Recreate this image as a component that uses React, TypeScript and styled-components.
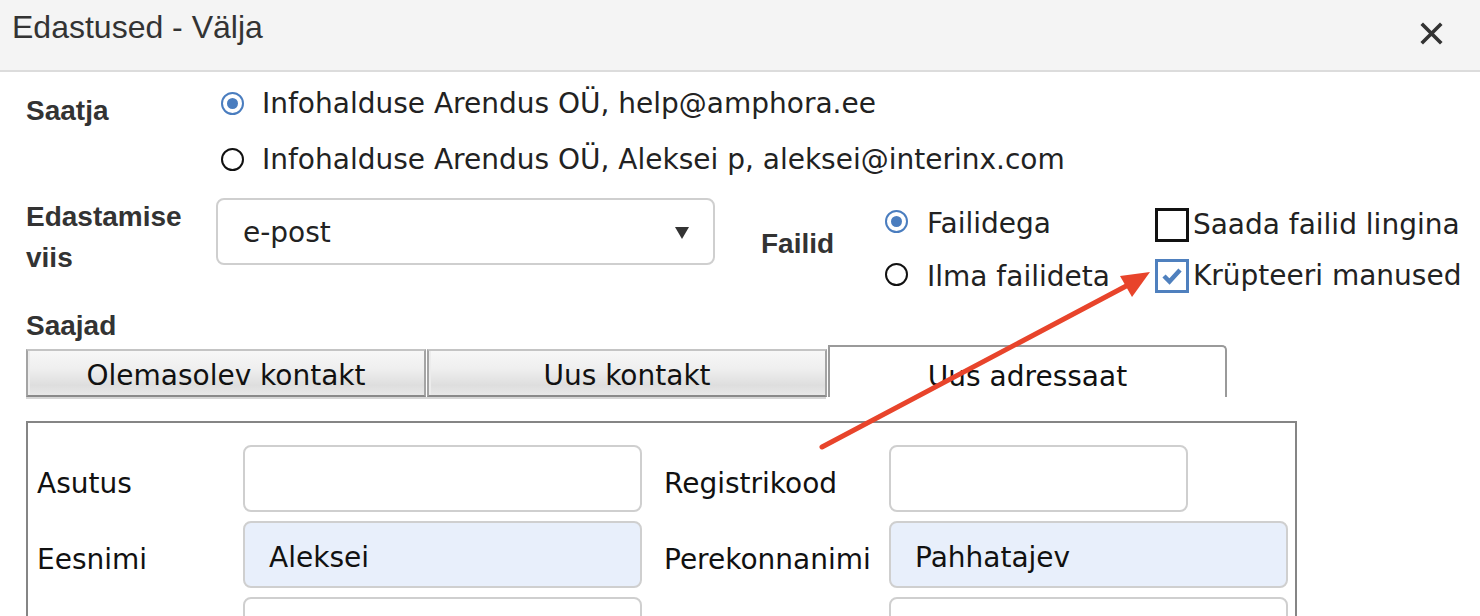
import React from "react";
import styled, { createGlobalStyle } from "styled-components";

const Global = createGlobalStyle`
  html, body { margin: 0; padding: 0; background: #fff; }
  body { font-family: "DejaVu Sans", Verdana, sans-serif; color: #222; }
  * { box-sizing: border-box; }
`;

const Dialog = styled.div`
  position: relative;
  width: 1480px;
  height: 616px;
  overflow: hidden;
  background: #fff;
`;

const Header = styled.div`
  height: 72px;
  background: #f4f4f4;
  border-bottom: 2px solid #dcdcdc;
  display: flex;
  justify-content: space-between;
  align-items: flex-start;
  padding: 8px 36px 0 12px;
`;

const Title = styled.div`
  font-family: "Liberation Sans", Arial, sans-serif;
  font-size: 32px;
  line-height: 38px;
  color: #333;
`;

const CloseBtn = styled.div`
  width: 24px;
  height: 24px;
  margin-top: 14px;
  display: flex;
`;

const Body = styled.div`
  padding: 3px 0 0 26px;
`;

const SenderRow = styled.div`
  display: grid;
  grid-template-columns: 195px 1fr;
`;

const BoldLabel = styled.div<{ $pt?: number; $w?: number; $lh?: number }>`
  font-family: "Liberation Sans", Arial, sans-serif;
  font-weight: bold;
  font-size: 28px;
  line-height: ${(p) => p.$lh ?? 56}px;
  color: #333;
  padding-top: ${(p) => p.$pt ?? 0}px;
  width: ${(p) => (p.$w ? p.$w + "px" : "auto")};
  flex-shrink: 0;
`;

const OptionList = styled.div`
  display: flex;
  flex-direction: column;
`;

const OptionItem = styled.div<{ $h: number }>`
  display: flex;
  align-items: center;
  height: ${(p) => p.$h}px;
  font-size: 28px;
  color: #222;
  white-space: nowrap;
`;

const Radio = styled.span<{ $on?: boolean; $gap: number; $lift?: number }>`
  width: 23px;
  height: 23px;
  border-radius: 50%;
  border: 2px solid ${(p) => (p.$on ? "#4a7dbf" : "#111")};
  margin-right: ${(p) => p.$gap}px;
  margin-top: ${(p) => -(p.$lift ?? 0) * 2}px;
  display: flex;
  align-items: center;
  justify-content: center;
  flex-shrink: 0;
  &::after {
    content: "";
    display: ${(p) => (p.$on ? "block" : "none")};
    width: 11px;
    height: 11px;
    border-radius: 50%;
    background: #4a7dbf;
  }
`;

const Check = styled.span<{ $on?: boolean }>`
  width: 34px;
  height: 34px;
  border: 3px solid ${(p) => (p.$on ? "#4f80be" : "#111")};
  margin-right: 4px;
  flex-shrink: 0;
  display: flex;
  align-items: center;
  justify-content: center;
`;

const DeliveryRow = styled.div`
  display: flex;
  margin-top: 11px;
  height: 150px;
`;

const SelectBox = styled.div`
  width: 499px;
  height: 67px;
  border: 2px solid #cfcfcf;
  border-radius: 8px;
  display: flex;
  align-items: center;
  justify-content: space-between;
  padding: 2px 24px 0 25px;
  font-size: 28px;
  color: #222;
  flex-shrink: 0;
`;

const FilesLabel = styled(BoldLabel)`
  margin-left: 46px;
`;

const FilesOptions = styled(OptionList)`
  margin-top: -1px;
`;

const CheckOptions = styled(OptionList)`
  margin-left: 45px;
  margin-top: 1px;
`;

const Recipients = styled.div`
  margin-top: -42px;
`;

const TabBar = styled.div`
  display: flex;
  align-items: flex-end;
  height: 52px;
  margin-top: -1px;
  position: relative;
  &::after {
    content: "";
    position: absolute;
    left: 0;
    width: 800px;
    bottom: -2px;
    height: 2px;
    background: #d6d6d6;
  }
`;

const Tab = styled.div<{ $active?: boolean }>`
  width: ${(p) => (p.$active ? 399 : 400)}px;
  height: ${(p) => (p.$active ? 52 : 48)}px;
  margin-right: 1px;
  display: flex;
  align-items: center;
  justify-content: center;
  font-size: 28px;
  color: #111;
  padding-top: ${(p) => (p.$active ? 8 : 4)}px;
  border: 2px solid ${(p) => (p.$active ? "#9a9a9a" : "#a4a4a4")};
  border-bottom: ${(p) => (p.$active ? "none" : "2px solid #8a8a8a")};
  border-top-color: ${(p) => (p.$active ? "#9a9a9a" : "#c4c4c4")};
  border-radius: ${(p) => (p.$active ? "0 5px 0 0" : "0")};
  background: ${(p) =>
    p.$active
      ? "#fff"
      : "linear-gradient(to bottom, #f7f7f7 0%, #efefef 40%, #dedede 78%, #e8e8e8 100%)"};
  box-shadow: ${(p) => (p.$active ? "none" : "inset 2px 0 0 #ececec")};
`;

const Panel = styled.div`
  margin-top: 24px;
  width: 1271px;
  height: 260px;
  border: 2px solid #858585;
  padding: 22px 0 0 9px;
`;

const FormGrid = styled.div`
  display: grid;
  grid-template-columns: 206px 399px 22px 225px auto;
  grid-auto-rows: 67px;
  row-gap: 9px;
  align-items: center;
`;

const FieldLabel = styled.div<{ $col: number }>`
  grid-column: ${(p) => p.$col};
  font-size: 28px;
  color: #111;
  padding-top: 10px;
  white-space: nowrap;
`;

const Input = styled.div<{ $w: number; $filled?: boolean; $col: number }>`
  grid-column: ${(p) => p.$col};
  width: ${(p) => p.$w}px;
  height: 67px;
  border: 2px solid #cfcfcf;
  border-radius: 8px;
  background: ${(p) => (p.$filled ? "#e8effb" : "#fff")};
  display: flex;
  align-items: center;
  padding: 6px 0 0 24px;
  font-size: 28px;
  color: #111;
`;

const Overlay = styled.svg`
  position: absolute;
  left: 0;
  top: 0;
  pointer-events: none;
`;

export default function App() {
  return (
    <Dialog>
      <Global />
      <Header>
        <Title>Edastused - Välja</Title>
        <CloseBtn>
          <svg width="24" height="24" viewBox="0 0 24 24">
            <path d="M3 3 L20 20 M20 3 L3 20" stroke="#333" strokeWidth="3.6" strokeLinecap="square" />
          </svg>
        </CloseBtn>
      </Header>
      <Body>
        <SenderRow>
          <BoldLabel $pt={8}>Saatja</BoldLabel>
          <OptionList>
            <OptionItem $h={56}>
              <Radio $on $gap={18} />
              Infohalduse Arendus OÜ, help@amphora.ee
            </OptionItem>
            <OptionItem $h={56}>
              <Radio $gap={18} />
              Infohalduse Arendus OÜ, Aleksei p, aleksei@interinx.com
            </OptionItem>
          </OptionList>
        </SenderRow>
        <DeliveryRow>
          <BoldLabel $w={190} $lh={41} style={{ marginTop: -2 }}>
            Edastamise
            <br />
            viis
          </BoldLabel>
          <SelectBox>
            e-post
            <svg width="14" height="12" viewBox="0 0 14 12">
              <path d="M0 0 H14 L7 12 Z" fill="#333" />
            </svg>
          </SelectBox>
          <FilesLabel $w={124} $lh={40} $pt={26}>
            Failid
          </FilesLabel>
          <FilesOptions>
            <OptionItem $h={53}>
              <Radio $on $gap={19} $lift={2} />
              Failidega
            </OptionItem>
            <OptionItem $h={53}>
              <Radio $gap={19} $lift={2} />
              Ilma failideta
            </OptionItem>
          </FilesOptions>
          <CheckOptions>
            <OptionItem $h={51}>
              <Check />
              Saada failid lingina
            </OptionItem>
            <OptionItem $h={51}>
              <Check $on>
                <svg width="20" height="18" viewBox="0 0 20 18">
                  <path d="M2 9 L7.5 14.5 L18 3" stroke="#4f80be" strokeWidth="4.5" fill="none" />
                </svg>
              </Check>
              Krüpteeri manused
            </OptionItem>
          </CheckOptions>
        </DeliveryRow>
        <Recipients>
          <BoldLabel $lh={40}>Saajad</BoldLabel>
          <TabBar>
            <Tab>Olemasolev kontakt</Tab>
            <Tab>Uus kontakt</Tab>
            <Tab $active>Uus adressaat</Tab>
          </TabBar>
          <Panel>
            <FormGrid>
              <FieldLabel $col={1}>Asutus</FieldLabel>
              <Input $col={2} $w={399} />
              <FieldLabel $col={4}>Registrikood</FieldLabel>
              <Input $col={5} $w={299} />
              <FieldLabel $col={1}>Eesnimi</FieldLabel>
              <Input $col={2} $w={399} $filled>
                Aleksei
              </Input>
              <FieldLabel $col={4}>Perekonnanimi</FieldLabel>
              <Input $col={5} $w={399} $filled>
                Pahhatajev
              </Input>
              <FieldLabel $col={1}></FieldLabel>
              <Input $col={2} $w={399} />
              <FieldLabel $col={4}></FieldLabel>
              <Input $col={5} $w={399} />
            </FormGrid>
          </Panel>
        </Recipients>
      </Body>
      <Overlay width="1480" height="616" viewBox="0 0 1480 616">
        <line x1="822" y1="447" x2="1130" y2="284" stroke="#e8442b" strokeWidth="5" strokeLinecap="round" />
        <polygon points="1150,272 1120,276 1132,297" fill="#e8442b" />
      </Overlay>
    </Dialog>
  );
}
